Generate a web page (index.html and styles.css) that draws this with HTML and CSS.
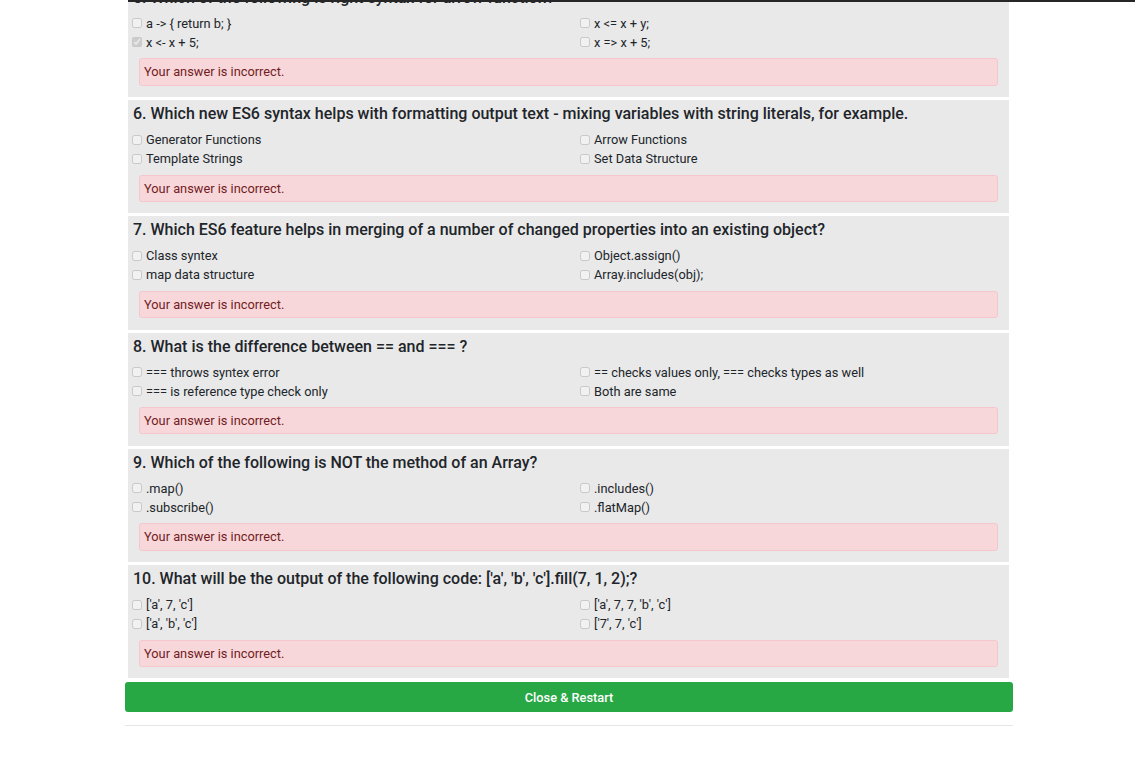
FILE: index.html
```html
<!DOCTYPE html>
<html lang="en">
<head>
<meta charset="utf-8">
<title>Quiz results</title>
<link rel="stylesheet" href="styles.css">
</head>
<body>
<div class="topline"></div>
<main class="quiz">
  <section class="question">
    <h5 class="q-title">5. Which of the following is right syntax for arrow function?</h5>
    <div class="options">
      <label class="opt"><input type="checkbox" disabled><span>a -&gt; { return b; }</span></label>
      <label class="opt"><input type="checkbox" disabled><span>x &lt;= x + y;</span></label>
      <label class="opt"><input type="checkbox" disabled checked><span>x &lt;- x + 5;</span></label>
      <label class="opt"><input type="checkbox" disabled><span>x =&gt; x + 5;</span></label>
    </div>
    <div class="alert">Your answer is incorrect.</div>
  </section>

  <section class="question">
    <h5 class="q-title">6. Which new ES6 syntax helps with formatting output text - mixing variables with string literals, for example.</h5>
    <div class="options">
      <label class="opt"><input type="checkbox" disabled><span>Generator Functions</span></label>
      <label class="opt"><input type="checkbox" disabled><span>Arrow Functions</span></label>
      <label class="opt"><input type="checkbox" disabled><span>Template Strings</span></label>
      <label class="opt"><input type="checkbox" disabled><span>Set Data Structure</span></label>
    </div>
    <div class="alert">Your answer is incorrect.</div>
  </section>

  <section class="question">
    <h5 class="q-title">7. Which ES6 feature helps in merging of a number of changed properties into an existing object?</h5>
    <div class="options">
      <label class="opt"><input type="checkbox" disabled><span>Class syntex</span></label>
      <label class="opt"><input type="checkbox" disabled><span>Object.assign()</span></label>
      <label class="opt"><input type="checkbox" disabled><span>map data structure</span></label>
      <label class="opt"><input type="checkbox" disabled><span>Array.includes(obj);</span></label>
    </div>
    <div class="alert">Your answer is incorrect.</div>
  </section>

  <section class="question">
    <h5 class="q-title">8. What is the difference between == and === ?</h5>
    <div class="options">
      <label class="opt"><input type="checkbox" disabled><span>=== throws syntex error</span></label>
      <label class="opt"><input type="checkbox" disabled><span>== checks values only, === checks types as well</span></label>
      <label class="opt"><input type="checkbox" disabled><span>=== is reference type check only</span></label>
      <label class="opt"><input type="checkbox" disabled><span>Both are same</span></label>
    </div>
    <div class="alert">Your answer is incorrect.</div>
  </section>

  <section class="question">
    <h5 class="q-title">9. Which of the following is NOT the method of an Array?</h5>
    <div class="options">
      <label class="opt"><input type="checkbox" disabled><span>.map()</span></label>
      <label class="opt"><input type="checkbox" disabled><span>.includes()</span></label>
      <label class="opt"><input type="checkbox" disabled><span>.subscribe()</span></label>
      <label class="opt"><input type="checkbox" disabled><span>.flatMap()</span></label>
    </div>
    <div class="alert">Your answer is incorrect.</div>
  </section>

  <section class="question">
    <h5 class="q-title">10. What will be the output of the following code: ['a', 'b', 'c'].fill(7, 1, 2);?</h5>
    <div class="options">
      <label class="opt"><input type="checkbox" disabled><span>['a', 7, 'c']</span></label>
      <label class="opt"><input type="checkbox" disabled><span>['a', 7, 7, 'b', 'c']</span></label>
      <label class="opt"><input type="checkbox" disabled><span>['a', 'b', 'c']</span></label>
      <label class="opt"><input type="checkbox" disabled><span>['7', 7, 'c']</span></label>
    </div>
    <div class="alert">Your answer is incorrect.</div>
  </section>

  <button class="btn-restart" type="button">Close &amp; Restart</button>
  <hr class="divider">
</main>
</body>
</html>
```

FILE: styles.css
```css
html, body {
  margin: 0;
  padding: 0;
  background: #ffffff;
}

body {
  font-family: Roboto, "Liberation Sans", Arial, sans-serif;
  color: #212529;
  font-size: 12.8px;
}

.topline {
  position: fixed;
  top: 0;
  left: 128px;
  right: 0;
  height: 2px;
  background: #262626;
}

.quiz {
  width: 888px;
  margin: -16.25px 0 0 125px;
  display: flex;
  flex-direction: column;
}

.question {
  background: #e9e9e9;
  margin: 0 4px 3px 3px;
  padding: 4px 0 11.5px 0;
  display: flex;
  flex-direction: column;
}

.q-title {
  margin: 0;
  padding-left: 5px;
  font-size: 16px;
  font-weight: 500;
  line-height: 20px;
  color: #212529;
}

.options {
  display: grid;
  grid-template-columns: 448px 1fr;
  padding-left: 4px;
  margin-top: 6px;
}

.opt {
  display: flex;
  align-items: center;
  height: 19px;
  line-height: 19px;
  color: #212529;
}

.opt input {
  width: 10px;
  height: 10px;
  margin: 0 4px 0 0;
  flex: none;
}

.alert {
  margin: 6.5px 11.5px 0 11px;
  padding: 5px 4px;
  line-height: 15.25px;
  background: #f8d7da;
  border: 1px solid #f5c6cb;
  border-radius: 3px;
  color: #721c24;
}

.btn-restart {
  margin-top: 0.75px;
  height: 30px;
  width: 888px;
  border: 0;
  border-radius: 3px;
  background: #28a745;
  color: #ffffff;
  font-family: Roboto, "Liberation Sans", Arial, sans-serif;
  font-size: 12.8px;
  font-weight: 500;
  padding: 0;
}

.divider {
  margin: 13px 0 0 0;
  border: 0;
  border-top: 1px solid #e5e5e5;
  height: 0;
}
```
